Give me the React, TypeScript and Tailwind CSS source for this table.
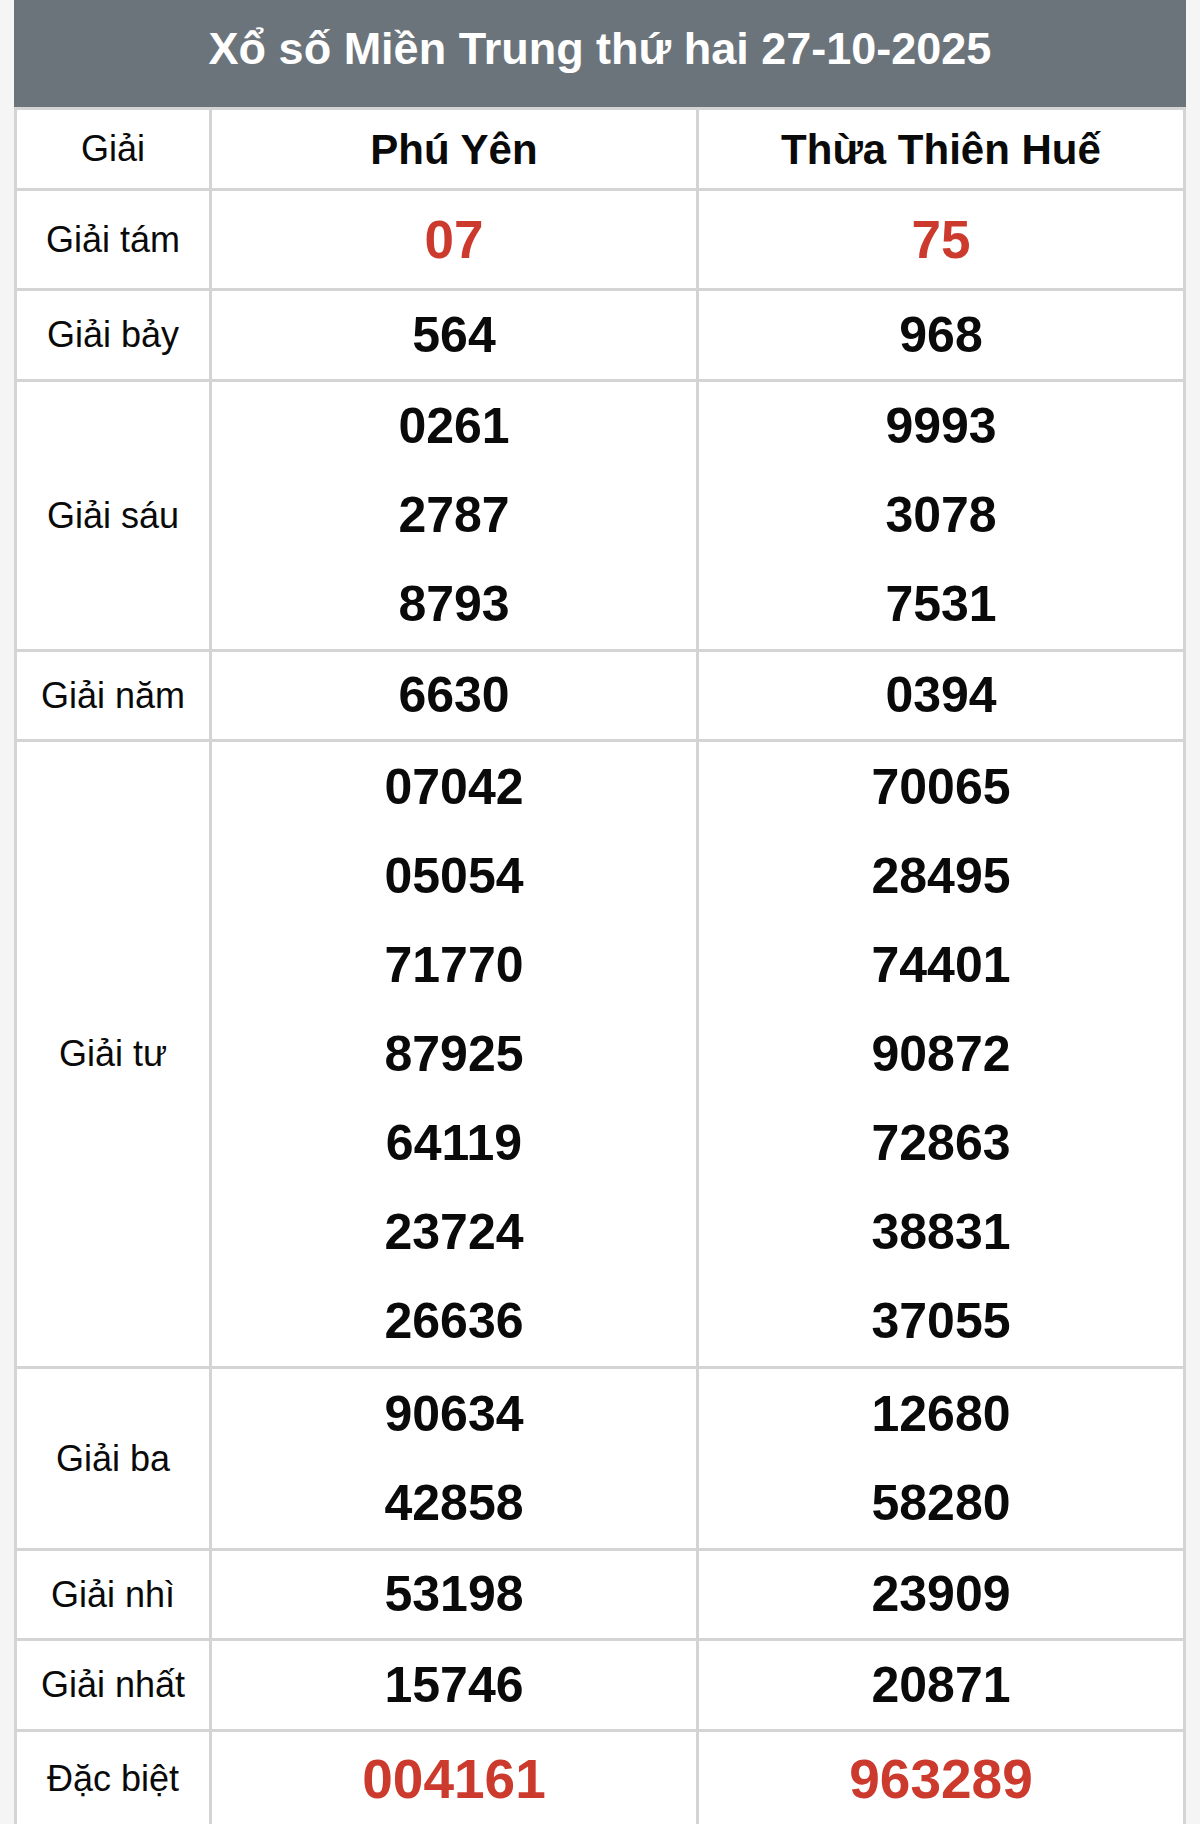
import React from "react";

type Row = {
  label: string;
  h: string;
  a: string[];
  b: string[];
  red?: boolean;
  big?: boolean;
};

const rows: Row[] = [
  { label: "Giải tám", h: "h-[97px]", a: ["07"], b: ["75"], red: true },
  { label: "Giải bảy", h: "h-[88px]", a: ["564"], b: ["968"] },
  { label: "Giải sáu", h: "h-[267px]", a: ["0261", "2787", "8793"], b: ["9993", "3078", "7531"] },
  { label: "Giải năm", h: "h-[87px]", a: ["6630"], b: ["0394"] },
  {
    label: "Giải tư",
    h: "h-[624px]",
    a: ["07042", "05054", "71770", "87925", "64119", "23724", "26636"],
    b: ["70065", "28495", "74401", "90872", "72863", "38831", "37055"],
  },
  { label: "Giải ba", h: "h-[179px]", a: ["90634", "42858"], b: ["12680", "58280"] },
  { label: "Giải nhì", h: "h-[87px]", a: ["53198"], b: ["23909"] },
  { label: "Giải nhất", h: "h-[88px]", a: ["15746"], b: ["20871"] },
  { label: "Đặc biệt", h: "h-[94px]", a: ["004161"], b: ["963289"], red: true, big: true },
];

function NumCell({ values, red, big, last }: { values: string[]; red?: boolean; big?: boolean; last?: boolean }) {
  const color = red ? "text-[#cc3a2e]" : "text-[#0a0a0a]";
  const size = big ? "text-[55px]" : red ? "text-[53px]" : "text-[50px]";
  return (
    <div
      className={
        last
          ? "flex-1 flex flex-col justify-center items-center"
          : "w-[487px] border-r-[3px] border-[#d4d4d4] flex flex-col justify-center items-center"
      }
    >
      {values.map((v, i) => (
        <div key={i} className={`h-[89px] flex items-center justify-center font-bold ${size} ${color}`}>
          {v}
        </div>
      ))}
    </div>
  );
}

export default function App() {
  return (
    <div className="min-h-[1824px] bg-[#f5f5f5] px-[14px] font-['Liberation_Sans',Arial,sans-serif]">
      <div className="h-[107px] bg-[#6c747b] flex items-center justify-center pb-[10px]">
        <span className="text-white font-bold text-[45px] leading-none">Xổ số Miền Trung thứ hai 27-10-2025</span>
      </div>
      <div className="bg-white border-x-[3px] border-t-[3px] border-[#d4d4d4]">
        <div className="flex h-[81px] border-b-[3px] border-[#d4d4d4]">
          <div className="w-[195px] border-r-[3px] border-[#d4d4d4] flex items-center justify-center text-[36px] text-[#0a0a0a]">
            Giải
          </div>
          <div className="w-[487px] border-r-[3px] border-[#d4d4d4] flex items-center justify-center text-[42px] font-bold text-[#0a0a0a]">
            Phú Yên
          </div>
          <div className="flex-1 flex items-center justify-center text-[42px] font-bold text-[#0a0a0a]">
            Thừa Thiên Huế
          </div>
        </div>
        {rows.map((r) => (
          <div key={r.label} className={`flex ${r.h} box-content border-b-[3px] border-[#d4d4d4]`}>
            <div className="w-[195px] border-r-[3px] border-[#d4d4d4] flex items-center justify-center text-[36px] text-[#0a0a0a]">
              {r.label}
            </div>
            <NumCell values={r.a} red={r.red} big={r.big} />
            <NumCell values={r.b} red={r.red} big={r.big} last />
          </div>
        ))}
      </div>
    </div>
  );
}
